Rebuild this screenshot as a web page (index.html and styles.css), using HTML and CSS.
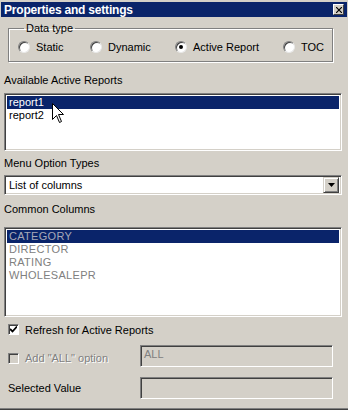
FILE: index.html
```html
<!DOCTYPE html>
<html lang="en">

<head>
    <meta charset="UTF-8">
    <title>Properties and settings</title>
    <link rel="stylesheet" href="styles.css">
</head>

<body>
    <div class="window">
        <!-- Title bar -->
        <div class="titlebar">
            <span class="title">Properties and settings</span>
            <span class="close-btn">
                <svg width="6" height="6" viewBox="0 0 6 6"><path d="M0 0L6 6M6 0L0 6" stroke="#000" stroke-width="1.2"/></svg>
            </span>
        </div>

        <div class="content">
            <fieldset class="groupbox">
                <legend>Data type</legend>
                <div class="radio-row">
                    <label class="radio-item"><span class="radio"></span>Static</label>
                    <label class="radio-item"><span class="radio"></span>Dynamic</label>
                    <label class="radio-item"><span class="radio checked"></span>Active Report</label>
                    <label class="radio-item"><span class="radio"></span>TOC</label>
                </div>
            </fieldset>

            <div class="field-label first">Available Active Reports</div>
            <div class="listbox reports">
                <div class="list-row selected">report1</div>
                <div class="list-row">report2</div>
                <svg class="cursor" width="13" height="21" viewBox="0 0 13 21">
                    <path d="M0.5 0.5L0.5 16.5L4.5 12.5L7.5 19.5L9.5 18.5L6.5 11.5L11.5 11.5Z" fill="#fff" stroke="#000" stroke-width="1" />
                </svg>
            </div>

            <div class="field-label">Menu Option Types</div>
            <div class="dropdown">
                <span class="dropdown-text">List of columns</span>
                <span class="dropdown-btn">
                    <svg width="7" height="4" viewBox="0 0 7 4"><path d="M0 0H7L3.5 4Z" fill="#000"/></svg>
                </span>
            </div>

            <div class="field-label cols">Common Columns</div>
            <div class="listbox columns">
                <div class="list-row selected">CATEGORY</div>
                <div class="list-row">DIRECTOR</div>
                <div class="list-row">RATING</div>
                <div class="list-row">WHOLESALEPR</div>
            </div>

            <div class="check-row refresh">
                <span class="checkbox checked">
                    <svg width="7" height="7" viewBox="0 0 7 7"><path d="M0 3L2.5 5.5L7 0.5" stroke="#000" stroke-width="1.8" fill="none"/></svg>
                </span>
                Refresh for Active Reports
            </div>

            <div class="option-row all-row">
                <div class="check-row disabled">
                    <span class="checkbox"></span>
                    Add "ALL" option
                </div>
                <div class="textbox">ALL</div>
            </div>

            <div class="option-row value-row">
                <div class="option-label">Selected Value</div>
                <div class="textbox"></div>
            </div>
        </div>
    </div>
</body>

</html>
```

FILE: styles.css
```css
/* Classic dialog look */
html,
body {
    margin: 0;
    background-color: #d4d0c8;
    font-family: "Liberation Sans", Arial, sans-serif;
    font-size: 11px;
    color: #000;
}

.window {
    width: 348px;
    height: 410px;
    box-sizing: border-box;
    padding-top: 2px;
    border-bottom: 1px solid #404040;
    box-shadow: inset 0 -1px 0 #808080;
    overflow: hidden;
}

.titlebar {
    height: 15px;
    margin: 0 1px;
    background-color: #0a246a;
    display: flex;
    align-items: center;
    justify-content: space-between;
    padding-left: 3px;
}

.title {
    color: #fff;
    font-weight: bold;
    font-size: 12px;
    letter-spacing: -0.2px;
}

.close-btn {
    width: 9px;
    height: 9px;
    margin-right: 3px;
    background: #d4d0c8;
    border: 1px solid;
    border-color: #fff #404040 #404040 #fff;
    display: flex;
    align-items: center;
    justify-content: center;
}

.content {
    padding: 0 6px 0 4px;
}

/* Group box */
.groupbox {
    box-sizing: border-box;
    width: 325px;
    margin: 5px 0 0 4px;
    padding: 0 0 8px 9px;
    border: 1px solid #808080;
    box-shadow: inset 1px 1px 0 #fff, 1px 1px 0 #fff;
}

.groupbox legend {
    margin-left: 6px;
    padding: 0 2px;
    line-height: 13px;
}

.radio-row {
    display: grid;
    grid-template-columns: 72px 85px 108px auto;
    margin-top: 5px;
}

.radio-item {
    display: flex;
    align-items: center;
    height: 13px;
}

.radio {
    width: 10px;
    height: 10px;
    border-radius: 50%;
    background: #fff;
    border: 1px solid;
    border-color: #808080 #e8e8e8 #e8e8e8 #808080;
    box-shadow: inset 1px 1px 0 #404040;
    margin-right: 6px;
    position: relative;
}

.radio.checked::after {
    content: "";
    position: absolute;
    left: 3px;
    top: 3px;
    width: 4px;
    height: 4px;
    border-radius: 50%;
    background: #000;
}

/* Labels and fields */
.field-label {
    line-height: 13px;
    margin-top: 6px;
    margin-bottom: 5px;
}

.field-label.first {
    margin-top: 12px;
    margin-bottom: 6px;
}

.field-label.cols {
    margin-top: 8px;
    margin-bottom: 11px;
}

.listbox {
    background: #fff;
    border: 1px solid;
    border-color: #808080 #fff #fff #808080;
    box-shadow: inset 1px 1px 0 #404040, inset -1px -1px 0 #d4d0c8;
    padding: 2px 2px;
    box-sizing: border-box;
    position: relative;
}

.listbox.reports {
    height: 58px;
}

.listbox.columns {
    height: 90px;
}

.list-row {
    height: 13px;
    line-height: 13px;
    padding-left: 2px;
}

.list-row.selected {
    background-color: #0a246a;
    color: #fff;
}

.columns .list-row {
    color: #808080;
    letter-spacing: 0.3px;
}

.columns .list-row.selected {
    color: #a6a8b8;
}

.cursor {
    position: absolute;
    left: 47px;
    top: 9px;
}

.dropdown {
    height: 20px;
    box-sizing: border-box;
    background: #fff;
    border: 1px solid;
    border-color: #808080 #fff #fff #808080;
    box-shadow: inset 1px 1px 0 #404040, inset -1px -1px 0 #d4d0c8;
    display: flex;
    align-items: center;
    justify-content: space-between;
    padding: 2px;
}

.dropdown-text {
    padding-left: 2px;
}

.dropdown-btn {
    width: 14px;
    height: 14px;
    background: #d4d0c8;
    border: 1px solid;
    border-color: #d4d0c8 #404040 #404040 #d4d0c8;
    box-shadow: inset 1px 1px 0 #fff, inset -1px -1px 0 #808080;
    display: flex;
    align-items: center;
    justify-content: center;
}

/* Checkboxes */
.check-row {
    display: flex;
    align-items: center;
    height: 13px;
    padding-left: 4px;
}

.check-row.refresh {
    margin-top: 6px;
}

.check-row.disabled {
    color: #808080;
    text-shadow: 1px 1px 0 #fff;
    margin-top: 4px;
}

.checkbox {
    width: 9px;
    height: 9px;
    background: #fff;
    border: 1px solid;
    border-color: #808080 #fff #fff #808080;
    box-shadow: inset 1px 1px 0 #404040;
    margin-right: 6px;
    display: flex;
    align-items: center;
    justify-content: center;
}

.disabled .checkbox {
    background: #d4d0c8;
}

.option-row {
    display: flex;
    align-items: center;
    margin-right: 9px;
}

.option-row.all-row {
    margin-top: 9px;
}

.option-row.value-row {
    margin-top: 10px;
}

.option-row > :first-child {
    width: 132px;
}

.option-label {
    padding-left: 4px;
}

.textbox {
    flex: 1;
    height: 22px;
    box-sizing: border-box;
    border: 1px solid;
    border-color: #808080 #fff #fff #808080;
    box-shadow: inset 1px 1px 0 #404040;
    background: #d4d0c8;
    color: #808080;
    padding: 2px 3px;
}
```
